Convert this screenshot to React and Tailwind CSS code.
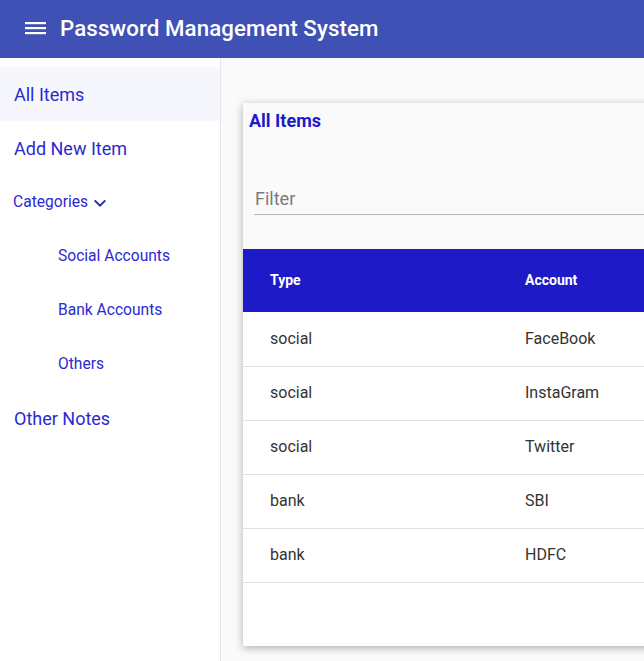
import React from "react";

const ROWS = [
  { type: "social", account: "FaceBook" },
  { type: "social", account: "InstaGram" },
  { type: "social", account: "Twitter" },
  { type: "bank", account: "SBI" },
  { type: "bank", account: "HDFC" },
];

const SUB_ITEMS = ["Social Accounts", "Bank Accounts", "Others"];

function MenuIcon() {
  return (
    <svg width="22" height="14" viewBox="0 0 22 14" className="shrink-0">
      <rect x="0" y="0" width="21" height="2.2" fill="white" />
      <rect x="0" y="5" width="21" height="2.2" fill="white" />
      <rect x="0" y="10" width="21" height="2.2" fill="white" />
    </svg>
  );
}

function Chevron() {
  return (
    <svg width="16" height="16" viewBox="0 0 24 24" className="ml-1">
      <path d="M4 8l8 8 8-8" fill="none" stroke="#2a2ab8" strokeWidth="3" />
    </svg>
  );
}

export default function App() {
  return (
    <div className="h-[661px] w-[644px] overflow-hidden flex flex-col bg-[#fafafa] font-['Roboto',sans-serif]">
      {/* Top bar */}
      <header className="h-[58px] shrink-0 bg-[#3f51b5] flex items-center pl-[25px] gap-[13px]">
        <MenuIcon />
        <h1 className="text-white text-[22.3px] font-medium tracking-[0.1px]">Password Management System</h1>
      </header>

      <div className="flex flex-1 min-h-0">
        {/* Sidebar */}
        <nav className="w-[221px] shrink-0 bg-white border-r border-[#e6e6e6] pt-[9px] text-[#2a2ad0]">
          <div className="h-[54px] flex items-center pl-[14px] bg-[#f6f7fd] text-[18px]">All Items</div>
          <div className="h-[54px] flex items-center pl-[14px] text-[18px]">Add New Item</div>
          <div className="h-[54px] flex items-center pl-[13px] pt-[2px] text-[15.6px]">
            Categories
            <Chevron />
          </div>
          {SUB_ITEMS.map((s) => (
            <div key={s} className="h-[54px] flex items-center pl-[58px] pt-[2px] text-[15.6px]">{s}</div>
          ))}
          <div className="h-[54px] flex items-center pl-[14px] text-[18px]">Other Notes</div>
        </nav>

        {/* Main */}
        <main className="flex-1 min-w-0 pl-[22px] pt-[45px] overflow-hidden">
          <div className="w-[640px] h-[543px] bg-[#fafafa] shadow-[0_2px_8px_rgba(0,0,0,0.3)] flex flex-col">
            <h2 className="h-[31px] pl-[6px] pt-[6px] text-[18px] leading-[24px] font-bold text-[#1c19c8]">All Items</h2>
            <div className="h-[81px] flex flex-col justify-end pl-[11px]">
              <div className="border-b border-[#b5b5b5] pb-[3px] pl-[1px] text-[18px] leading-[24px] text-[#7a7a7a]">Filter</div>
            </div>
            <table className="mt-[34px] w-full border-collapse">
              <thead>
                <tr className="h-[63px] bg-[#1e1ac8] text-white text-[14px] font-bold text-left">
                  <th className="pl-[27px] w-[282px] font-bold">Type</th>
                  <th className="font-bold">Account</th>
                </tr>
              </thead>
              <tbody className="bg-white text-[16px] text-[#333]">
                {ROWS.map((r) => (
                  <tr key={r.account} className="h-[54px] border-b border-[#e0e0e0]">
                    <td className="pl-[27px]">{r.type}</td>
                    <td>{r.account}</td>
                  </tr>
                ))}
              </tbody>
            </table>
            <div className="flex-1 bg-white" />
          </div>
        </main>
      </div>
    </div>
  );
}
